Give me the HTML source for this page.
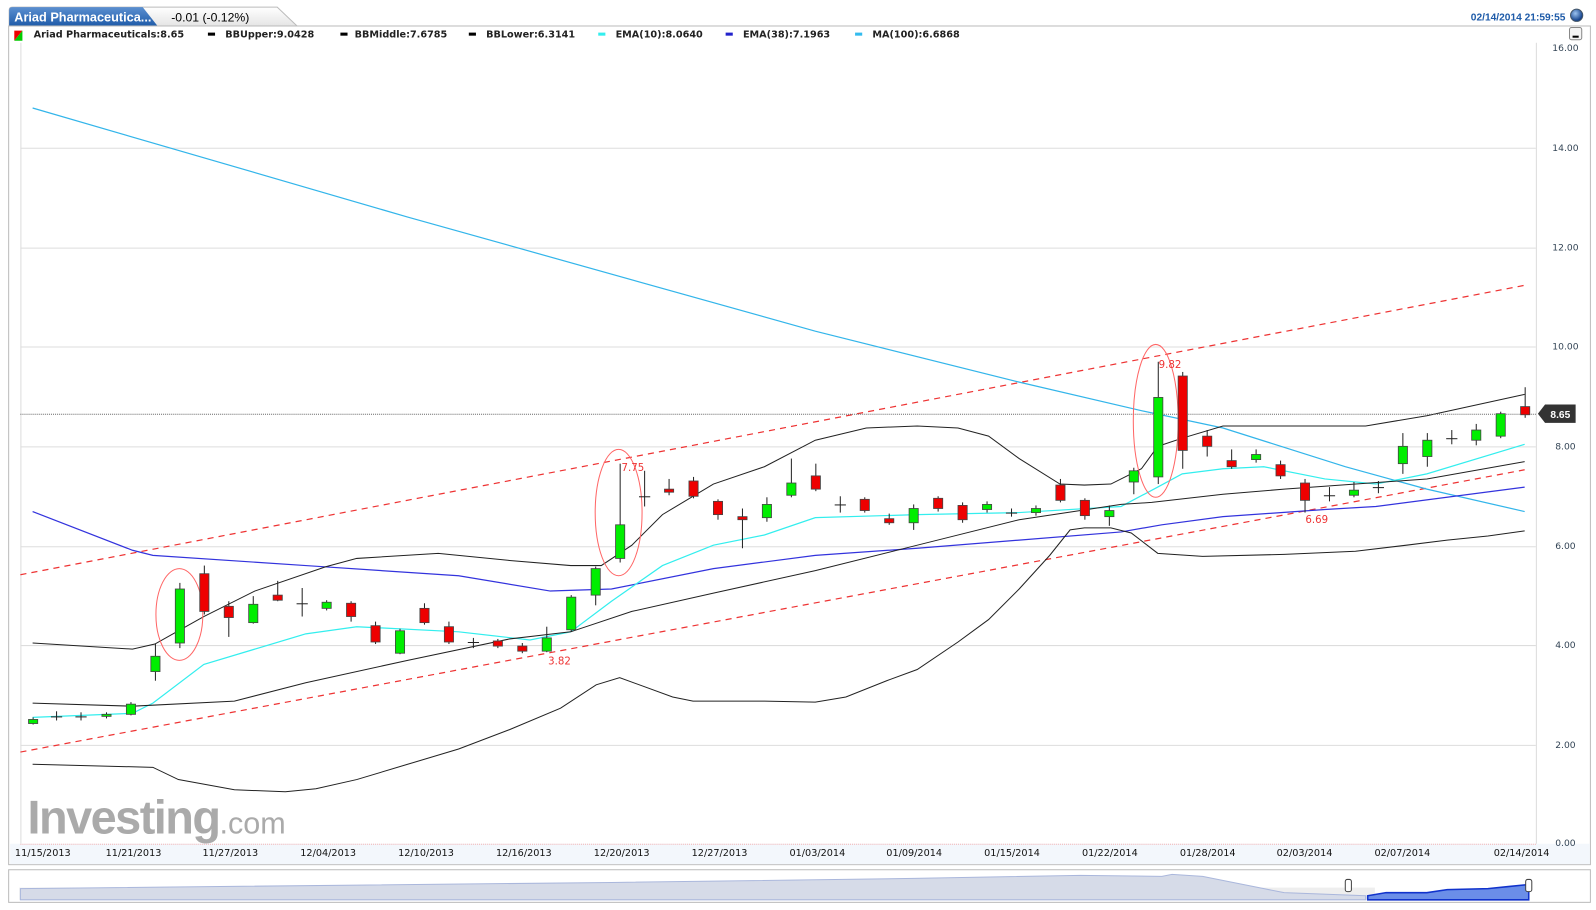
<!DOCTYPE html>
<html><head><meta charset="utf-8"><style>
body{margin:0;background:#fff;width:1596px;height:910px;overflow:hidden;font-family:"Liberation Sans",Verdana,sans-serif}
svg{display:block}
svg text{font-family:"Liberation Sans",sans-serif}
svg .dv text{font-family:"DejaVu Sans","Liberation Sans",sans-serif}
</style></head><body>
<svg width="1596" height="910" viewBox="0 0 1566 893" preserveAspectRatio="none" xmlns="http://www.w3.org/2000/svg" id="s">
<defs><linearGradient id="tab" x1="0" y1="0" x2="0" y2="1"><stop offset="0" stop-color="#5b8fd0"/><stop offset="1" stop-color="#1d5aa8"/></linearGradient>
<linearGradient id="tab2" x1="0" y1="0" x2="0" y2="1"><stop offset="0" stop-color="#fff"/><stop offset="1" stop-color="#e4e4e4"/></linearGradient>
<radialGradient id="ball" cx="0.4" cy="0.35" r="0.6"><stop offset="0" stop-color="#9cc3f0"/><stop offset="1" stop-color="#12408a"/></radialGradient></defs>
<!-- tabs -->
<path d="M9 26 L9 10 Q9 7 12 7 L272 7 L292 26 Z" fill="url(#tab2)" stroke="#bbb"/>
<path d="M9 26 L9 10 Q9 7 12 7 L140 7 L155 26 Z" fill="url(#tab)"/>
<text x="14" y="21" font-size="12.5" fill="#fff" font-weight="bold">Ariad Pharmaceutica...</text>
<text x="168" y="21" font-size="12" fill="#000">-0.01 (-0.12%)</text>
<text x="1536" y="20" font-size="10" fill="#1d5aa8" font-weight="bold" text-anchor="end">02/14/2014 21:59:55</text>
<circle cx="1547" cy="15" r="6" fill="url(#ball)" stroke="#456"/>
<!-- main panel -->
<rect x="8.5" y="25.5" width="1552" height="823" fill="#fff" stroke="#bbb"/>
<rect x="20" y="42" width="1487" height="786" fill="#fff"/>
<rect x="10" y="828" width="1550" height="20" fill="#f3f7fc"/>
<line x1="20" y1="828.5" x2="1507" y2="828.5" stroke="#f3b0b0" stroke-dasharray="1 1"/>
<line x1="1507.5" y1="42" x2="1507.5" y2="828" stroke="#ddd"/>
<line x1="20.5" y1="42" x2="20.5" y2="828" stroke="#ddd"/>
<!-- legend -->
<g font-size="9.5" font-weight="bold" fill="#222" class="dv">
<polygon points="14,30 22,30 14,40" fill="#e00"/><polygon points="22,30 22,40 14,40" fill="#0c0"/>
<text x="33" y="37">Ariad Pharmaceuticals:8.65</text>
<rect x="204" y="32" width="7" height="3" fill="#000"/><text x="221" y="37">BBUpper:9.0428</text>
<rect x="334" y="32" width="7" height="3" fill="#000"/><text x="348" y="37">BBMiddle:7.6785</text>
<rect x="460" y="32" width="7" height="3" fill="#000"/><text x="477" y="37">BBLower:6.3141</text>
<rect x="587" y="32" width="7" height="3" fill="#3ee"/><text x="604" y="37">EMA(10):8.0640</text>
<rect x="712" y="32" width="7" height="3" fill="#22c"/><text x="729" y="37">EMA(38):7.1963</text>
<rect x="839" y="32" width="7" height="3" fill="#3be"/><text x="856" y="37">MA(100):6.6868</text>
</g>
<rect x="1540" y="27" width="12" height="12" rx="2" fill="#f4f4f4" stroke="#888"/><rect x="1543" y="35" width="6" height="2" fill="#000"/>
<!-- grid -->
<g stroke="#ddd">
<line x1="20" y1="145.5" x2="1507" y2="145.5"/><line x1="20" y1="243.5" x2="1507" y2="243.5"/><line x1="20" y1="340.5" x2="1507" y2="340.5"/><line x1="20" y1="438.5" x2="1507" y2="438.5"/><line x1="20" y1="536.5" x2="1507" y2="536.5"/><line x1="20" y1="633.5" x2="1507" y2="633.5"/><line x1="20" y1="731.5" x2="1507" y2="731.5"/>
</g>
<g font-size="9" fill="#345" text-anchor="middle" class="dv">
<text x="1536" y="50">16.00</text><text x="1536" y="148">14.00</text><text x="1536" y="246">12.00</text><text x="1536" y="343">10.00</text><text x="1536" y="441">8.00</text><text x="1536" y="539">6.00</text><text x="1536" y="636">4.00</text><text x="1536" y="734">2.00</text><text x="1536" y="830">0.00</text>
</g>
<!-- logo -->
<text x="27" y="818" font-size="46" font-weight="bold" fill="#aaa" letter-spacing="-1.5">Investing<tspan font-size="30" font-weight="normal" letter-spacing="0">.com</tspan></text>
<!-- dates -->
<g font-size="9.5" fill="#111" text-anchor="middle" class="dv">
<text x="42" y="840">11/15/2013</text><text x="131" y="840">11/21/2013</text><text x="226" y="840">11/27/2013</text><text x="322" y="840">12/04/2013</text><text x="418" y="840">12/10/2013</text><text x="514" y="840">12/16/2013</text><text x="610" y="840">12/20/2013</text><text x="706" y="840">12/27/2013</text><text x="802" y="840">01/03/2014</text><text x="897" y="840">01/09/2014</text><text x="993" y="840">01/15/2014</text><text x="1089" y="840">01/22/2014</text><text x="1185" y="840">01/28/2014</text><text x="1280" y="840">02/03/2014</text><text x="1376" y="840">02/07/2014</text><text x="1493" y="840">02/14/2014</text>
</g>
<!-- lines -->
<g fill="none">
<polyline stroke="#e33" stroke-width="1.2" stroke-dasharray="6 5" points="20,564 1496,280"/>
<polyline stroke="#e33" stroke-width="1.2" stroke-dasharray="6 5" points="20,738 1496,461"/>
<polyline stroke="#33b5ea" stroke-width="1.2" points="32,106 400,213 800,325 1000,375 1120,403 1200,420 1320,458 1400,480 1496,502"/>
<polyline stroke="#3333dd" stroke-width="1.2" points="32,502 130,540 150,545 300,555 450,565 540,580 600,578 700,558 800,545 900,538 1000,530 1100,522 1140,515 1200,507 1300,500 1350,497 1496,478"/>
<polyline stroke="#33eeee" stroke-width="1.2" points="32,704 130,700 150,690 200,652 300,622 350,615 450,620 520,628 560,620 600,590 650,555 700,535 750,525 800,508 900,505 1000,503 1100,497 1136,478 1160,465 1200,460 1240,458 1300,470 1350,475 1400,465 1496,436"/>
<polyline stroke="#222" stroke-width="1" points="32,690 130,693 230,688 300,670 400,648 500,627 560,620 620,600 700,582 800,560 900,535 1000,510 1100,495 1130,493 1200,485 1260,480 1400,470 1496,453"/>
<polyline stroke="#222" stroke-width="1" points="32,631 130,637 152,632 200,605 250,580 320,556 350,548 430,543 500,550 560,555 590,555 620,535 650,505 700,475 750,458 800,432 850,420 900,418 940,420 970,428 1000,450 1040,475 1064,476 1090,475 1120,460 1136,438 1160,430 1200,418 1340,418 1400,408 1496,387"/>
<polyline stroke="#222" stroke-width="1" points="32,750 150,753 175,765 230,775 280,777 310,774 350,765 400,750 450,735 500,716 550,695 585,672 608,665 630,673 660,684 680,688 750,688 800,689 830,684 870,668 900,657 940,630 970,608 1000,578 1030,545 1050,520 1064,518 1090,518 1110,523 1136,543 1180,546 1260,544 1330,541 1380,535 1420,530 1460,526 1496,521"/>
<line x1="20" y1="406.5" x2="1507" y2="406.5" stroke="#666" stroke-dasharray="1 1"/>
<ellipse cx="176" cy="603" rx="23" ry="45" stroke="#f66"/>
<ellipse cx="607" cy="503" rx="23" ry="62" stroke="#f66"/>
<ellipse cx="1134" cy="413" rx="22" ry="75" stroke="#f66"/>
</g>
<g id="c"></g>
<g font-size="10" fill="#e33" text-anchor="middle" class="dv">
<text x="621" y="462">7.75</text><text x="1148" y="361">9.82</text><text x="549" y="652">3.82</text><text x="1292" y="513">6.69</text>
</g>
<path d="M1509 406 L1516 397 L1546 397 L1546 415 L1516 415 Z" fill="#333"/>
<text x="1531" y="410" font-size="10" fill="#fff" text-anchor="middle" font-weight="bold">8.65</text>
<!-- navigator -->
<rect x="8.5" y="853.5" width="1552" height="32" fill="#fff" stroke="#bbb"/>
<rect x="19" y="871" width="1330" height="12" fill="#eee"/>
<path d="M20 883 L20 872 C200 870 400 868 600 866 S900 862 1060 859 L1140 860 L1150 858 L1180 860 L1260 876 L1340 879 L1340 883 Z" fill="#d6dbe8" stroke="#aab7dc"/>
<path d="M1342 883 L1342 879 L1360 876 L1400 876 L1420 873 L1460 872 L1480 870 L1500 868 L1500 883 Z" fill="#6b8ee8" stroke="#1133cc" stroke-width="1.5"/>
<rect x="1320" y="863" width="6" height="12" rx="2" fill="#fff" stroke="#444"/>
<rect x="1497" y="863" width="6" height="12" rx="2" fill="#fff" stroke="#444"/>
</svg>
<script>
var d=[[32,706,710,704,711,'g'],[55,703,703,698,707,'d'],[79,703,703,699,707,'d'],[104,701,703,699,705,'g'],[128,691,701,689,702,'g'],[152,644,659,632,668,'g'],[176,578,631,572,636,'g'],[200,563,600,555,603,'r'],[224,595,606,590,625,'r'],[248,593,611,585,612,'g'],[272,584,589,570,590,'r'],[296,592,592,577,605,'d'],[320,591,597,589,599,'g'],[344,592,605,590,610,'r'],[368,614,630,610,632,'r'],[392,619,641,617,642,'g'],[416,597,611,592,613,'r'],[440,615,630,610,632,'r'],[464,630,630,626,636,'d'],[488,629,634,627,636,'r'],[512,634,639,631,641,'r'],[536,626,639,615,640,'g'],[560,586,618,584,620,'g'],[584,558,584,556,594,'g'],[608,515,548,455,552,'g'],[632,487,487,462,497,'d'],[656,480,483,470,486,'r'],[680,472,487,468,489,'r'],[704,492,505,490,510,'r'],[728,507,510,499,538,'r'],[752,495,508,488,512,'g'],[776,474,486,450,488,'g'],[800,467,480,455,482,'r'],[824,495,495,487,503,'d'],[848,490,501,488,503,'r'],[872,509,513,504,515,'r'],[896,499,513,495,520,'g'],[920,489,499,487,502,'r'],[944,496,510,493,513,'r'],[968,495,500,492,503,'g'],[992,503,503,499,507,'d'],[1016,499,503,496,506,'g'],[1040,476,491,470,493,'r'],[1064,491,506,489,510,'r'],[1088,501,507,496,516,'g'],[1112,462,473,459,485,'g'],[1136,390,468,355,475,'g'],[1160,369,442,365,460,'r'],[1184,428,438,422,448,'r'],[1208,452,458,441,460,'r'],[1232,446,451,441,454,'g'],[1256,456,467,452,470,'r'],[1280,474,491,470,503,'r'],[1304,486,486,478,492,'d'],[1328,481,486,473,488,'g'],[1352,478,478,472,484,'d'],[1376,438,455,425,465,'g'],[1400,432,448,425,458,'g'],[1424,430,430,422,436,'d'],[1448,422,432,416,437,'g'],[1472,406,428,404,430,'g'],[1496,399,407,380,410,'r']];
var s='';d.forEach(function(c){var x=c[0];s+='<line x1="'+(x+.5)+'" y1="'+c[3]+'" x2="'+(x+.5)+'" y2="'+c[4]+'" stroke="#222"/>';
if(c[5]=='d'){s+='<line x1="'+(x-5)+'" y1="'+(c[1]+.5)+'" x2="'+(x+6)+'" y2="'+(c[1]+.5)+'" stroke="#222"/>';}
else{s+='<rect x="'+(x-4)+'" y="'+c[1]+'" width="9" height="'+Math.max(2,c[2]-c[1])+'" fill="'+(c[5]=='g'?'#00ee00':'#ee0000')+'" stroke="#444" stroke-width="0.8"/>';}});
document.getElementById('c').innerHTML=s;
</script>
</body></html>
